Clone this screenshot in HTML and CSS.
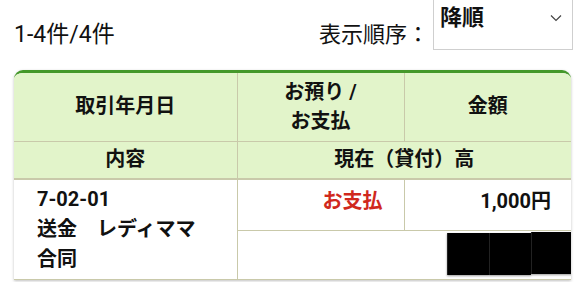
FILE: index.html
```html
<!DOCTYPE html>
<html lang="ja">
<head>
<meta charset="utf-8">
<link rel="stylesheet" href="styles.css">
</head>
<body>
<div class="topbar">
  <div class="count">1-4件/4件</div>
  <div class="sort">
    <span class="sort-label">表示順序：</span>
    <div class="select">
      <span class="select-value">降順</span>
      <svg class="chev" width="12" height="8" viewBox="0 0 12 8"><path d="M1 1.5 L6 6.5 L11 1.5" fill="none" stroke="#444" stroke-width="1.2"/></svg>
    </div>
  </div>
</div>
<div class="card">
  <table class="tbl">
    <colgroup><col class="c1"><col class="c2"><col class="c3"></colgroup>
    <thead>
      <tr class="h1">
        <th>取引年月日</th>
        <th>お預り /<br>お支払</th>
        <th>金額</th>
      </tr>
      <tr class="h2">
        <th>内容</th>
        <th colspan="2">現在（貸付）高</th>
      </tr>
    </thead>
    <tbody>
      <tr class="r1">
        <td rowspan="2" class="desc">7-02-01<br>送金　レディママ<br>合同</td>
        <td class="pay">お支払</td>
        <td class="amt">1,000円</td>
      </tr>
      <tr class="r2">
        <td colspan="2" class="bal"><span class="redact"><span class="rb"></span><span class="rb"></span><span class="rb up"></span></span></td>
      </tr>
    </tbody>
  </table>
</div>
</body>
</html>
```
FILE: styles.css
```css
html, body { margin: 0; padding: 0; background: #fff; }
body {
  font-family: Roboto, "Noto Sans CJK JP", sans-serif;
  color: #111;
  width: 585px;
  height: 282px;
  overflow: hidden;
}
.topbar {
  display: flex;
  justify-content: space-between;
  align-items: flex-end;
  padding: 0 12px 0 14px;
  height: 50px;
}
.count { font-size: 23px; line-height: 26px; padding-bottom: 2px; }
.sort { display: flex; align-items: flex-end; }
.sort-label { font-size: 22px; line-height: 26px; padding-bottom: 2px; margin-right: 4px; }
.select {
  width: 140px;
  height: 66px;
  margin-top: -16px;
  border: 1px solid #cfcfcf;
  border-top: none;
  box-sizing: border-box;
  display: flex;
  align-items: flex-start;
  justify-content: space-between;
  padding: 18px 10px 0 6px;
  align-self: flex-end;
}
.select-value { font-size: 22px; font-weight: 700; line-height: 26px; margin-top: 3px; }
.chev { margin-top: 12px; }
.card {
  margin: 20px 14px 0 14px;
  width: 557px;
  border-top: 3px solid #44982a;
  border-radius: 9px 9px 0 0;
  overflow: hidden;
  box-shadow: 0 1px 3px rgba(0,0,0,0.25);
  background: #fff;
}
.tbl {
  width: 100%;
  border-collapse: collapse;
  table-layout: fixed;
  font-size: 20px;
}
.c1 { width: 223px; }
.c2 { width: 167px; }
.c3 { width: 167px; }
th, td { border: 1px solid #c9c9aa; padding: 0; }
tr > :first-child { border-left: none; }
tr > :last-child { border-right: none; }
thead tr.h1 th { border-top: none; }
th {
  background: #e2f4ca;
  font-weight: 700;
  text-align: center;
  line-height: 29px;
}
.h1 { height: 68px; }
.h2 { height: 38px; }
.h2 th { border-bottom: 2px solid #c9c9aa; }
td { font-weight: 700; vertical-align: top; }
.r1 { height: 51px; }
.r2 { height: 49px; }
.desc { padding: 4px 10px 0 23px; line-height: 30px; }
.pay { color: #d0281d; text-align: right; padding: 7px 21px 0 0; line-height: 28px; }
.amt { text-align: right; padding: 7px 20px 0 0; line-height: 28px; }
.bal { text-align: right; padding: 2px 0 0 0; }
.redact { display: inline-flex; margin-right: -2px; vertical-align: top; }
.rb { width: 41px; height: 42px; background: #000; border-left: 1px solid #222; box-shadow: 0 1px 2px rgba(0,0,0,0.4); }
.rb.up { margin-top: -1px; }
```
